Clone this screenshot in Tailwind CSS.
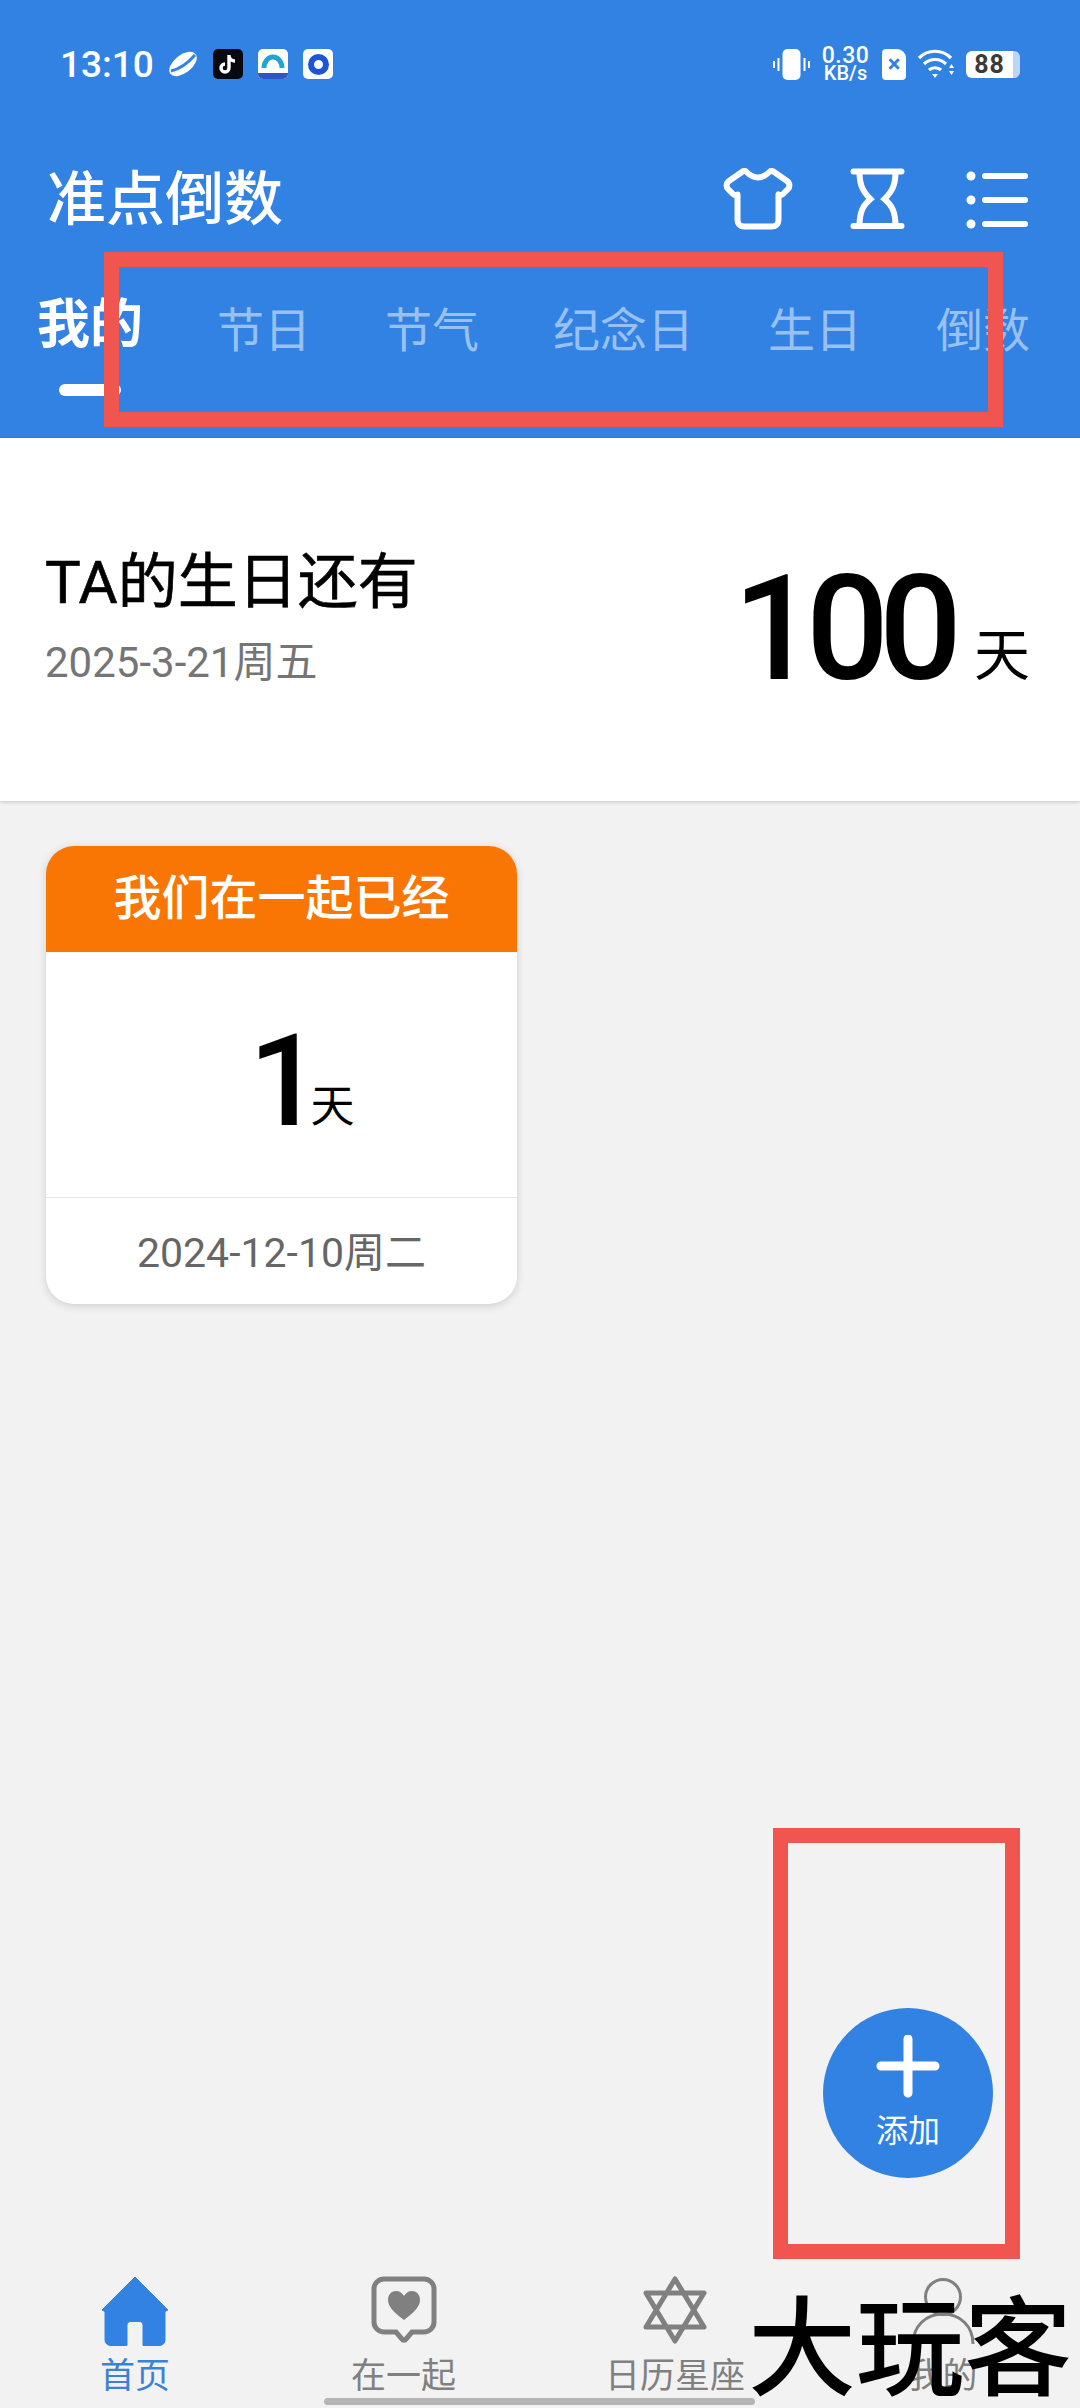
<!DOCTYPE html>
<html lang="zh-CN">
<head>
    <meta charset="UTF-8">
    <meta name="viewport" content="width=device-width, initial-scale=1.0">
    <title>准点倒数</title>
    <script src="https://cdn.jsdelivr.net/npm/@tailwindcss/browser@4"></script>
</head>
<body class="bg-[#f2f2f2] font-[Roboto,'Noto_Sans_CJK_SC',sans-serif]">
<div class="relative flex flex-col w-[1080px] h-[2408px] overflow-hidden">

    <!-- Header -->
    <header class="h-[438px] shrink-0 bg-[#3282e3] text-white">
        <!-- Status bar -->
        <div class="flex items-center justify-between h-[30px] mt-[49px] pl-[60px] pr-[60px]">
            <div class="flex items-center">
                <span class="text-[37px] leading-none font-medium w-[108px]">13:10</span>
                <svg width="30" height="30" viewBox="0 0 30 30" class="mr-[15px]">
                    <ellipse cx="15" cy="15" rx="16" ry="9" transform="rotate(-38 15 15)" fill="#fff"/>
                    <path d="M3 22 C12 20 20 14 27 6" stroke="#3282e3" stroke-width="3" fill="none"/>
                </svg>
                <div class="w-[30px] h-[30px] rounded-[5px] bg-[#08080f] flex items-center justify-center mr-[15px]">
                    <svg width="20" height="22" viewBox="0 0 20 22"><path d="M11 2v13a4 4 0 1 1-4-4M11 3c.5 3 3 5 6 5" fill="none" stroke="#fff" stroke-width="3.4"/></svg>
                </div>
                <div class="w-[30px] h-[30px] rounded-[5px] bg-white overflow-hidden flex flex-col items-center mr-[15px]">
                    <svg width="30" height="24" viewBox="0 0 30 24"><path d="M6 19a9 11 0 1 1 18 0" fill="none" stroke="#1fa3d8" stroke-width="5"/></svg>
                    <div class="w-full h-[6px] bg-[#2f55c8]"></div>
                </div>
                <div class="w-[30px] h-[30px] rounded-[5px] bg-white flex items-center justify-center">
                    <div class="w-[21px] h-[21px] rounded-full border-[6px] border-[#1d55d8]"></div>
                </div>
            </div>
            <div class="flex items-center">
                <svg width="37" height="31" viewBox="0 0 37 31" class="mr-[12px]">
                    <rect x="9.500" y="0" width="18" height="31" rx="5" fill="#fff"/>
                    <path d="M5.500 9v13M1 12v7M31.500 9v13M36 12v7" stroke="#fff" stroke-width="2"/>
                </svg>
                <div class="flex flex-col items-center w-[47px] font-medium mr-[13px]">
                    <span class="text-[23px] leading-[18px] tracking-[0.5px]">0.30</span>
                    <span class="text-[20px] leading-[16px]">KB/s</span>
                </div>
                <div class="w-[24px] h-[31px] bg-white rounded-[4px] rounded-tr-[9px] flex items-center justify-center mr-[12px]">
                    <span class="text-[#3282e3] text-[24px] leading-none font-bold">×</span>
                </div>
                <svg width="37" height="30" viewBox="0 0 37 30" class="mr-[11px]">
                    <path d="M1 9c9-9 23-9 32 0M6 15c6-6 16-6 22 0M11 21c3-3 9-3 12 0" fill="none" stroke="#fff" stroke-width="3.2"/>
                    <path d="M14 25h6l-3 4z M31 19h5l-2.500-4z M31 22h5l-2.500 4z" fill="#fff"/>
                </svg>
                <div class="flex items-center">
                    <div class="w-[47px] h-[27px] bg-white rounded-l-[6px] text-[#3a3a3a] text-[25px] leading-[27px] font-bold text-center tracking-[1px]">88</div>
                    <div class="w-[7px] h-[27px] bg-[#bcd6f6] rounded-r-[6px]"></div>
                </div>
            </div>
        </div>

        <!-- Title row -->
        <div class="flex items-center justify-between h-[70px] mt-[85px] pl-[47px] pr-[52px]">
            <h1 class="text-[59px] leading-none font-medium">准点倒数</h1>
            <div class="flex items-center">
                <svg width="70" height="62" viewBox="0 0 70 62" class="mr-[57px]">
                    <path d="M23 3.500C27 7.500 31 9.500 35 9.500C39 9.500 43 7.500 47 3.500C48 2.800 49 2.800 50 3.300L64 13C67 15 67 19 65 21L60 26C58.500 27.500 57 27.500 55.500 26.500V52C55.500 56 52.500 58.500 49 58.500H21C17.500 58.500 14.500 56 14.500 52V26.500C13 27.500 11.500 27.500 10 26L5 21C3 19 3 15 6 13L20 3.300C21 2.800 22 2.800 23 3.500Z" fill="none" stroke="#fff" stroke-width="6" stroke-linejoin="round"/>
                </svg>
                <svg width="55" height="62" viewBox="0 0 54 62" class="mr-[61px]">
                    <path d="M3 3.500H51M3 58H51" stroke="#fff" stroke-width="6" stroke-linecap="round"/>
                    <path d="M9 4C9 18 13 24 20 31C13 37 9 43 9 58M45 4C45 18 41 24 34 31C41 37 45 43 45 58" fill="none" stroke="#fff" stroke-width="6"/>
                </svg>
                <svg width="62" height="60" viewBox="0 0 62 60">
                    <circle cx="5" cy="7" r="4.500" fill="#fff"/>
                    <circle cx="5" cy="31" r="4.500" fill="#fff"/>
                    <circle cx="5" cy="55" r="4.500" fill="#fff"/>
                    <path d="M19 7H59M19 31H59M19 55H59" stroke="#fff" stroke-width="6" stroke-linecap="round"/>
                </svg>
            </div>
        </div>

        <!-- Tabs -->
        <nav class="flex items-start gap-[74px] mt-[68px] pl-[37px] text-[47px] leading-[58px] text-white/50 whitespace-nowrap">
            <div class="flex flex-col items-center w-[106px]">
                <span class="text-[53px] leading-[58px] font-bold text-white -mt-[6px]">我的</span>
                <div class="w-[62px] h-[12px] rounded-full bg-white mt-[30px]"></div>
            </div>
            <span>节日</span>
            <span>节气</span>
            <span>纪念日</span>
            <span>生日</span>
            <span>倒数</span>
        </nav>
    </header>

    <!-- Next event panel -->
    <section class="flex items-start justify-between h-[363px] shrink-0 bg-white shadow-[0_1px_4px_rgba(0,0,0,0.18)] pl-[45px] pr-[50px]">
        <div class="pt-[110px]">
            <h2 class="text-[60px] leading-[70px] text-black [-webkit-text-stroke:0.6px_black]">TA的生日还有</h2>
            <p class="text-[42px] leading-[50px] text-[#757575] mt-[20px]">2025-3-21周五</p>
        </div>
        <div class="flex items-end text-black pt-[119px]">
            <span class="text-[146px] leading-none font-medium tracking-[-10px]">100</span>
            <span class="text-[56px] leading-none ml-[22px] mb-[19px]">天</span>
        </div>
    </section>

    <main class="flex-1 px-[46px] pt-[45px]">
        <!-- Card -->
        <article class="w-[471px] h-[458px] bg-white rounded-[28px] overflow-hidden shadow-[0_2px_8px_rgba(0,0,0,0.15)] flex flex-col">
            <div class="h-[106px] bg-[#f97605] text-white text-[48px] font-medium flex items-center justify-center">我们在一起已经</div>
            <div class="h-[245px] flex items-center justify-center pt-[13px] pl-[40px] text-black">
                <div class="flex items-end">
                    <span class="text-[128px] leading-none font-medium">1</span>
                    <span class="text-[44px] leading-none -ml-[11px] mb-[16px]">天</span>
                </div>
            </div>
            <div class="flex-1 border-t border-[#e4e4e4] text-[#666] text-[41px] flex items-center justify-center pt-[5px]">2024-12-10周二</div>
        </article>
    </main>

    <!-- Bottom tabs -->
    <nav class="h-[140px] shrink-0 grid grid-cols-4 text-[35px] leading-[40px] text-[#808080] text-center">
        <a class="flex flex-col items-center text-[#3b82d6]">
            <svg width="68" height="70" viewBox="0 0 68 70" class="h-[80px] pt-[5px]">
                <path d="M34 1.500L67 34.500L64 36V64C64 67.500 62 70 58 70H42V50C42 47.500 41 46 38 46H30C27 46 26 47.500 26 50V70H10C6 70 4 67.500 4 64V36L1 34.500Z" fill="#3282e3" stroke="#3282e3" stroke-linejoin="round"/>
            </svg>
            <span class="mt-[9px]">首页</span>
        </a>
        <a class="flex flex-col items-center -ml-[3px]">
            <svg width="66" height="70" viewBox="0 0 66 70" class="h-[80px] pt-[6px]">
                <path d="M13 3H53C58 3 63 7 63 13V46C63 52 58 56 53 56H41L35 63C34 64.500 32 64.500 31 63L25 56H13C8 56 3 52 3 46V13C3 7 8 3 13 3Z" fill="none" stroke="#808080" stroke-width="5"/>
                <path d="M33 44C22 36 17 30 17 24C17 18 21 15 25 15C29 15 31 17 33 20C35 17 37 15 41 15C45 15 49 18 49 24C49 30 44 36 33 44Z" fill="#808080"/>
            </svg>
            <span class="mt-[9px]">在一起</span>
        </a>
        <a class="flex flex-col items-center">
            <svg width="66" height="70" viewBox="0 0 66 70" class="h-[80px] pt-[4px]">
                <path d="M33 4L62 52H4ZM33 66L62 18H4Z" fill="none" stroke="#808080" stroke-width="5" stroke-linejoin="round"/>
            </svg>
            <span class="mt-[9px]">日历星座</span>
        </a>
        <a class="flex flex-col items-center pr-[5px]">
            <svg width="66" height="70" viewBox="0 0 66 70" class="h-[80px] pt-[6px]">
                <circle cx="33" cy="21" r="17.500" fill="none" stroke="#808080" stroke-width="3"/>
                <path d="M3 68C3 50 16 38 33 38C50 38 63 50 63 68" fill="none" stroke="#808080" stroke-width="3"/>
            </svg>
            <span class="mt-[9px]">我的</span>
        </a>
    </nav>

    <!-- Floating add button -->
    <button class="absolute left-[823px] top-[2008px] w-[170px] h-[170px] rounded-full bg-[#3282e3] text-white flex flex-col items-center pt-[27px]">
        <svg width="64" height="64" viewBox="0 0 64 64">
            <path d="M32 4V58M5 31H59" stroke="#fff" stroke-width="9" stroke-linecap="round"/>
        </svg>
        <span class="text-[32px] leading-[36px] mt-[14px]">添加</span>
    </button>

    <!-- Home indicator -->
    <div class="absolute left-[324px] top-[2398px] w-[431px] h-[7px] rounded-full bg-[#b5b5b5]"></div>

    <!-- Red annotation boxes -->
    <div class="absolute left-[104px] top-[252px] w-[899px] h-[175px] border-[15px] border-[#f0554f]"></div>
    <div class="absolute left-[773px] top-[1828px] w-[247px] h-[431px] border-[15px] border-[#f0554f]"></div>

    <!-- Watermark -->
    <div class="absolute left-[748px] top-[2290px] text-[108px] leading-[120px] font-medium text-black whitespace-nowrap blur-[0.6px]">大玩客</div>
</div>
</body>
</html>
